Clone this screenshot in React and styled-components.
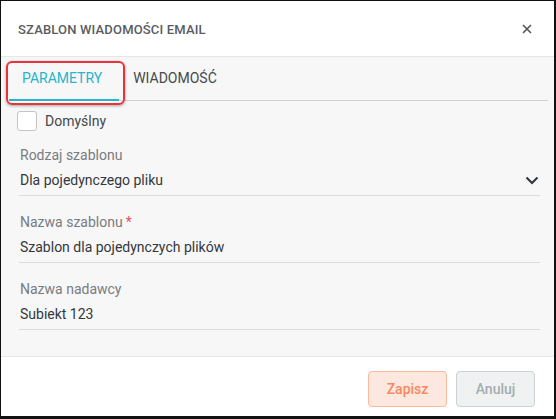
import React from "react";
import styled, { createGlobalStyle } from "styled-components";

const Global = createGlobalStyle`
  html, body { margin: 0; padding: 0; background: #ffffff; }
  body { font-family: Roboto, "Noto Sans", Arial, sans-serif; }
  * { box-sizing: border-box; }
`;

const Dialog = styled.div`
  position: relative;
  width: 556px;
  height: 419px;
  display: flex;
  flex-direction: column;
  background: #ffffff;
  border-style: solid;
  border-color: #111111;
  border-width: 1px 2px 3px 1px;
`;

const Header = styled.div`
  height: 56px;
  flex: none;
  display: flex;
  align-items: center;
  justify-content: space-between;
  padding: 0 21px 0 17px;
  border-bottom: 1px solid #e6e6e6;
`;

const Title = styled.div`
  font-size: 13px;
  font-weight: 500;
  letter-spacing: 0.17px;
  color: #585d61;
  text-transform: uppercase;
  padding-top: 1px;
`;

const CloseButton = styled.button`
  border: 0;
  background: transparent;
  padding: 0;
  width: 12px;
  height: 12px;
  display: flex;
  align-items: center;
  justify-content: center;
  cursor: pointer;
`;

const Body = styled.div`
  flex: 1;
  background: #f7f7f7;
  padding: 0 6px 25px 8px;
  display: flex;
  flex-direction: column;
`;

const TabBar = styled.div`
  display: flex;
  height: 44px;
  border-bottom: 1px solid #d2d2d2;
`;

const Tab = styled.div`
  display: flex;
  align-items: center;
  padding: ${(p) => (p.$active ? "0 17px 0 13px" : "0 14px")};
  font-size: 14px;
  color: ${(p) => (p.$active ? "#26b5cc" : "#444a4e")};
  border-bottom: 2px solid ${(p) => (p.$active ? "#26b5cc" : "transparent")};
  margin-bottom: -1px;
  text-transform: uppercase;
`;

const Highlight = styled.div`
  position: absolute;
  left: 5px;
  top: 60px;
  width: 119px;
  height: 44px;
  border: 2px solid #e8323c;
  border-radius: 6px;
  box-shadow: 0 1px 3px rgba(0, 0, 0, 0.35);
  pointer-events: none;
`;

const Content = styled.div`
  padding: 0 8px 0 10px;
  display: flex;
  flex-direction: column;
`;

const CheckRow = styled.label`
  display: flex;
  align-items: center;
  gap: 8px;
  margin-top: 10px;
  margin-left: -2px;
  height: 20px;
  font-size: 14px;
  color: #43484c;
`;

const Box = styled.span`
  width: 20px;
  height: 20px;
  border: 1px solid #c4c4c4;
  border-radius: 3px;
  background: #ffffff;
  flex: none;
`;

const Field = styled.div`
  margin-top: ${(p) => (p.$first ? "15px" : "17px")};
  padding-bottom: 5px;
  border-bottom: 1px solid #dcdcdc;
  display: flex;
  flex-direction: column;
`;

const Label = styled.div`
  font-size: 14px;
  line-height: 18px;
  color: #777c80;
  margin-left: 1px;
`;

const Required = styled.span`
  color: #ee4a5a;
  margin-left: 3px;
`;

const ValueRow = styled.div`
  margin-top: 6px;
  height: 20px;
  display: flex;
  align-items: center;
  justify-content: space-between;
  font-size: 14px;
  color: #33383c;
  margin-left: 1px;
`;

const Footer = styled.div`
  flex: none;
  height: 60px;
  border-top: 1px solid #e8e8e8;
  display: flex;
  justify-content: flex-end;
  align-items: flex-start;
  gap: 9px;
  padding: 14px 19px 0 0;
`;

const Button = styled.button`
  width: 79px;
  height: 36px;
  border-radius: 4px;
  font-family: inherit;
  font-size: 14px;
  font-weight: 500;
  border: 1px solid ${(p) => (p.$primary ? "#fbb9a2" : "#c9d2d6")};
  background: ${(p) => (p.$primary ? "#fde8e0" : "#f0f2f2")};
  color: ${(p) => (p.$primary ? "#f7885f" : "#a3acb0")};
  cursor: pointer;
`;

const Chevron = () => (
  <svg width="14" height="9" viewBox="0 0 14 9" style={{ marginRight: 1 }}>
    <path d="M1.5 1.5 L7 7 L12.5 1.5" fill="none" stroke="#2f3438" strokeWidth="2" />
  </svg>
);

export default function App() {
  return (
    <>
      <Global />
      <Dialog>
        <Header>
          <Title>Szablon wiadomości email</Title>
          <CloseButton aria-label="Zamknij">
            <svg width="10" height="10" viewBox="0 0 10 10">
              <path d="M1 1 L9 9 M9 1 L1 9" stroke="#50565a" strokeWidth="1.6" />
            </svg>
          </CloseButton>
        </Header>
        <Body>
          <TabBar>
            <Tab $active>Parametry</Tab>
            <Tab>Wiadomość</Tab>
          </TabBar>
          <Content>
            <CheckRow>
              <Box />
              Domyślny
            </CheckRow>
            <Field $first>
              <Label>Rodzaj szablonu</Label>
              <ValueRow>
                Dla pojedynczego pliku
                <Chevron />
              </ValueRow>
            </Field>
            <Field>
              <Label>
                Nazwa szablonu<Required>*</Required>
              </Label>
              <ValueRow>Szablon dla pojedynczych plików</ValueRow>
            </Field>
            <Field>
              <Label>Nazwa nadawcy</Label>
              <ValueRow>Subiekt 123</ValueRow>
            </Field>
          </Content>
        </Body>
        <Footer>
          <Button $primary>Zapisz</Button>
          <Button>Anuluj</Button>
        </Footer>
        <Highlight />
      </Dialog>
    </>
  );
}
